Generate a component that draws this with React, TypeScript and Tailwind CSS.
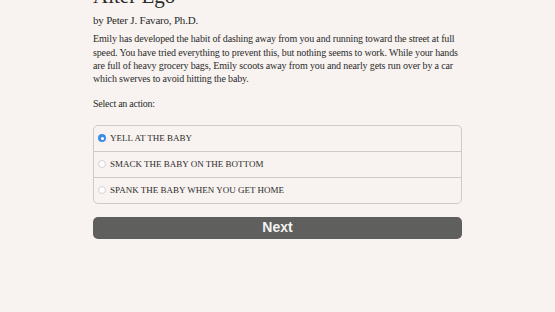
import React from "react";

const serif = { fontFamily: '"Liberation Serif", "DejaVu Serif", serif' };

export default function App() {
  const options = [
    "YELL AT THE BABY",
    "SMACK THE BABY ON THE BOTTOM",
    "SPANK THE BABY WHEN YOU GET HOME",
  ];
  return (
    <div className="w-[555px] h-[312px] overflow-hidden bg-[#f8f3f0] text-[#2b2b2b]" style={serif}>
      <div className="w-[369px] ml-[93px] mt-[-16px]">
        <h1 className="text-[21px] leading-[24px] font-normal">Alter Ego</h1>
        <p className="mt-[5px] text-[11px] leading-[14px] tracking-[-0.2px]">by Peter J. Favaro, Ph.D.</p>
        <p className="mt-[5.3px] text-[10px] leading-[13.3px] tracking-[-0.14px]">
          Emily has developed the habit of dashing away from you and running toward the street at full
          <br />
          speed. You have tried everything to prevent this, but nothing seems to work. While your hands
          <br />
          are full of heavy grocery bags, Emily scoots away from you and nearly gets run over by a car
          <br />
          which swerves to avoid hitting the baby.
        </p>
        <p className="mt-[11.8px] text-[10px] leading-[13.3px] tracking-[-0.25px]">Select an action:</p>
        <div className="mt-[14.2px] border border-[#cfcac6] rounded-[5px] overflow-hidden">
          {options.map((o, i) => (
            <div
              key={o}
              className={`h-[25px] box-content flex items-center pl-[4px] gap-[4px] ${i > 0 ? "border-t border-[#cfcac6]" : ""}`}
            >
              {i === 0 ? (
                <span className="w-[8px] h-[8px] rounded-full bg-[#3b8be6] flex items-center justify-center">
                  <span className="w-[3px] h-[3px] rounded-full bg-white" />
                </span>
              ) : (
                <span className="w-[8px] h-[8px] rounded-full border border-[#d6d2ce] bg-white" />
              )}
              <span className="text-[9px] leading-none">{o}</span>
            </div>
          ))}
        </div>
        <button
          className="mt-[13px] w-full h-[22px] rounded-[5px] bg-[#5f5f5d] text-[#f3f3f3] text-[14px] font-bold"
          style={{ fontFamily: '"Liberation Sans", Arial, sans-serif' }}
        >
          Next
        </button>
      </div>
    </div>
  );
}
